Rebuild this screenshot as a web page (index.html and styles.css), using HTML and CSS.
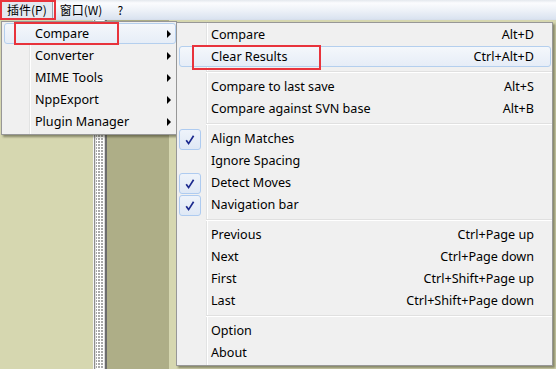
FILE: index.html
```html
<!DOCTYPE html>
<html>
<head>
<meta charset="utf-8">
<link rel="stylesheet" href="styles.css">
</head>
<body>
<div class="screen">
  <div class="menubar">
    <span class="mb-item pressed">插件(P)</span>
    <span class="mb-item">窗口(W)</span>
    <span class="mb-item">?</span>
  </div>
  <div class="workspace">
    <div class="pane pane-light"></div>
    <div class="splitter"></div>
    <div class="pane pane-dark"></div>
    <div class="pane pane-rest"></div>
  </div>

  <div class="menu menu-main">
    <div class="item hot"><span class="label">Compare</span><span class="arrow"></span></div>
    <div class="item"><span class="label">Converter</span><span class="arrow"></span></div>
    <div class="item"><span class="label">MIME Tools</span><span class="arrow"></span></div>
    <div class="item"><span class="label">NppExport</span><span class="arrow"></span></div>
    <div class="item"><span class="label">Plugin Manager</span><span class="arrow"></span></div>
  </div>

  <div class="menu menu-sub">
    <div class="item"><span class="label">Compare</span><span class="key">Alt+D</span></div>
    <div class="item hot"><span class="label">Clear Results</span><span class="key">Ctrl+Alt+D</span></div>
    <div class="sep"></div>
    <div class="item"><span class="label">Compare to last save</span><span class="key">Alt+S</span></div>
    <div class="item"><span class="label">Compare against SVN base</span><span class="key">Alt+B</span></div>
    <div class="sep"></div>
    <div class="item checked"><span class="check"><svg width="12" height="12" viewBox="0 0 12 12"><path d="M2.2 6.2 L4.6 9.6 L9.6 1.8" fill="none" stroke="#1c2a8e" stroke-width="1.7" stroke-linejoin="miter"/></svg></span><span class="label">Align Matches</span></div>
    <div class="item"><span class="label">Ignore Spacing</span></div>
    <div class="item checked"><span class="check"><svg width="12" height="12" viewBox="0 0 12 12"><path d="M2.2 6.2 L4.6 9.6 L9.6 1.8" fill="none" stroke="#1c2a8e" stroke-width="1.7" stroke-linejoin="miter"/></svg></span><span class="label">Detect Moves</span></div>
    <div class="item checked"><span class="check"><svg width="12" height="12" viewBox="0 0 12 12"><path d="M2.2 6.2 L4.6 9.6 L9.6 1.8" fill="none" stroke="#1c2a8e" stroke-width="1.7" stroke-linejoin="miter"/></svg></span><span class="label">Navigation bar</span></div>
    <div class="sep"></div>
    <div class="item"><span class="label">Previous</span><span class="key">Ctrl+Page up</span></div>
    <div class="item"><span class="label">Next</span><span class="key">Ctrl+Page down</span></div>
    <div class="item"><span class="label">First</span><span class="key">Ctrl+Shift+Page up</span></div>
    <div class="item"><span class="label">Last</span><span class="key">Ctrl+Shift+Page down</span></div>
    <div class="sep"></div>
    <div class="item"><span class="label">Option</span></div>
    <div class="item"><span class="label">About</span></div>
  </div>

  <div class="redbox redbox-menubar"></div>
  <div class="redbox redbox-compare"></div>
  <div class="redbox redbox-clear"></div>
</div>
</body>
</html>
```

FILE: styles.css
```css
* { box-sizing: border-box; }
html, body { margin: 0; padding: 0; }
body {
  width: 556px;
  height: 369px;
  overflow: hidden;
  font-family: "Noto Sans", "Noto Sans CJK SC", sans-serif;
  font-size: 12.6px;
  color: #000;
}
.screen {
  position: relative;
  width: 556px;
  height: 369px;
  display: flex;
  flex-direction: column;
  background: #d6d7b0;
}
.menubar {
  height: 20px;
  display: flex;
  align-items: center;
  background: linear-gradient(#e4e8ee 0, #fbfcfe 3px, #eef2f8 10px, #dae3f0 19px, #d3dbe8 20px);
  font-family: "Noto Sans CJK SC", "Noto Sans", sans-serif;
  font-size: 12px;
}
.mb-item {
  height: 20px;
  line-height: 18px;
  padding: 0 6px;
  border: 1px solid transparent;
}
.mb-item.pressed {
  padding: 0 5px 0 6px;
  border-color: #9aa4b2;
  background: #e4e9f1;
}
.mb-item:nth-child(2) { padding: 0 8px 0 6px; }
.mb-item:nth-child(3) { padding: 0 6px 0 5px; }

.workspace {
  flex: 1;
  display: flex;
}
.pane-light { width: 93px; background: #d6d7b0; }
.splitter {
  width: 14px;
  border-left: 1px solid #f4f4f4;
  border-right: 2px solid #6c6c6c;
  box-shadow: inset 1px 0 0 #8c8c8c, inset 2px 0 0 #e0e0e0, inset -1px 0 0 #d8d8d8;
  background-color: #ffffff;
  background-image:
    linear-gradient(#ffffff 1px, transparent 1px),
    linear-gradient(90deg, #ffffff 1px, #a8a8a8 1px);
  background-size: 3px 3px;
  background-position: 3px 0;
}
.pane-dark { width: 62px; background: #aeae87; }
.pane-rest { flex: 1; background: #d6d7b0; }

.menu {
  position: absolute;
  background: #f0f0f0;
  border: 1px solid #979797;
  padding: 1px 0;
  box-shadow: 2px 2px 2px rgba(40, 40, 20, 0.45);
}
.menu::before {
  content: "";
  position: absolute;
  top: 0;
  bottom: 0;
  width: 1px;
  background: #e2e3e3;
  box-shadow: 1px 0 0 #ffffff;
}
.menu-main {
  left: 1px;
  top: 21px;
  width: 176px;
}
.menu-main::before { left: 27px; }
.menu-sub {
  left: 176px;
  top: 22px;
  width: 377px;
  z-index: 2;
}
.menu-sub::before { left: 29px; }

.item {
  position: relative;
  z-index: 1;
  height: 22px;
  display: flex;
  align-items: center;
  padding-left: 33px;
  padding-right: 18px;
  padding-bottom: 2px;
  white-space: nowrap;
}
.menu-sub .item { padding-left: 34px; }
.item .label { flex: 1; }
.item .key { text-align: right; }
.item.hot::before {
  content: "";
  position: absolute;
  left: 2px;
  right: 0;
  top: 0;
  bottom: 1px;
  border: 1px solid #b4cfee;
  border-radius: 3px;
  background: linear-gradient(#f4f7fb, #e6edf7);
  z-index: -1;
}
.menu-sub .item.hot::before { right: 1px; top: 0; }

.arrow {
  width: 0;
  height: 0;
  border-left: 4px solid #000;
  border-top: 4px solid transparent;
  border-bottom: 4px solid transparent;
  margin-right: -12px;
  margin-top: 2px;
}
.menu-main .item { padding-right: 17px; }

.check {
  position: absolute;
  left: 2px;
  top: 1px;
  width: 22px;
  height: 21px;
  border: 1px solid #aecbf0;
  border-radius: 3px;
  background: linear-gradient(#eef3fa, #dfe8f5);
  display: flex;
  align-items: center;
  justify-content: center;
}

.sep {
  height: 8px;
  margin-left: 29px;
  position: relative;
}
.sep::after {
  content: "";
  position: absolute;
  left: 0;
  right: 0;
  top: 3px;
  height: 1px;
  background: #e0e0e0;
  box-shadow: 0 1px 0 #ffffff;
}

.redbox {
  position: absolute;
  border: 2px solid #e8333c;
  z-index: 5;
}
.redbox-menubar { left: 0; top: 0; width: 56px; height: 20px; }
.redbox-compare { left: 14px; top: 22px; width: 105px; height: 23px; }
.redbox-clear { left: 192px; top: 45px; width: 129px; height: 25px; }
```
